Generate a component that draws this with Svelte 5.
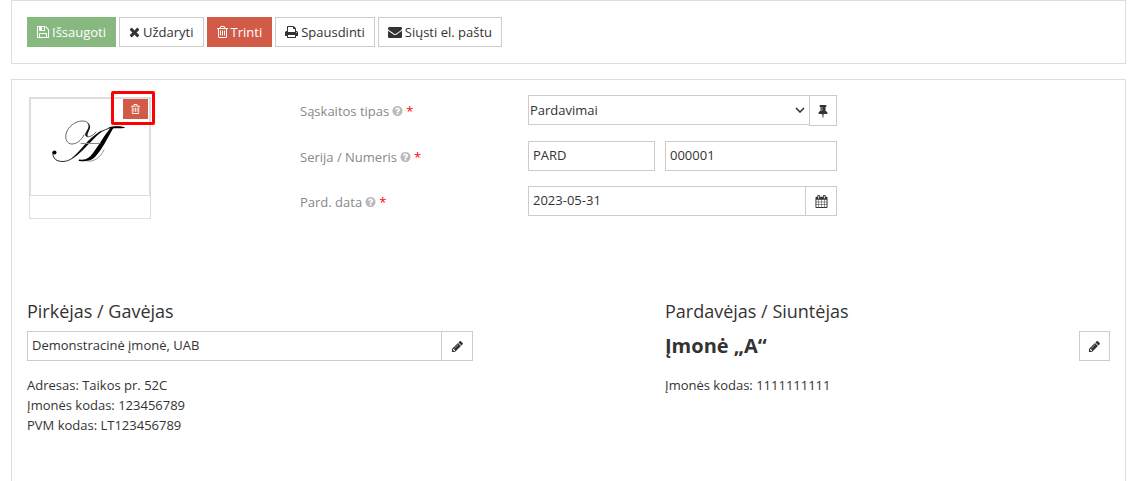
<script>
  const icons = {
    save: 'M512 1536h768v-384h-768v384zm896 0h128v-896q0-14-10-38.5t-20-34.5l-281-281q-10-10-34-20t-39-10v416q0 40-28 68t-68 28h-576q-40 0-68-28t-28-68v-416h-128v1280h128v-416q0-40 28-68t68-28h832q40 0 68 28t28 68v416zm-384-928v-320q0-13-9.5-22.5t-22.5-9.5h-192q-13 0-22.5 9.5t-9.5 22.5v320q0 13 9.5 22.5t22.5 9.5h192q13 0 22.5-9.5t9.5-22.5zm640 32v928q0 40-28 68t-68 28h-1344q-40 0-68-28t-28-68v-1344q0-40 28-68t68-28h928q40 0 88 20t76 48l280 280q28 28 48 76t20 88z',
    close: 'M1490 1322q0 40-28 68l-136 136q-28 28-68 28t-68-28l-294-294-294 294q-28 28-68 28t-68-28l-136-136q-28-28-28-68t28-68l294-294-294-294q-28-28-28-68t28-68l136-136q28-28 68-28t68 28l294 294 294-294q28-28 68-28t68 28l136 136q28 28 28 68t-28 68l-294 294 294 294q28 28 28 68z',
    trash: 'M704 736v576q0 14-9 23t-23 9h-64q-14 0-23-9t-9-23v-576q0-14 9-23t23-9h64q14 0 23 9t9 23zm256 0v576q0 14-9 23t-23 9h-64q-14 0-23-9t-9-23v-576q0-14 9-23t23-9h64q14 0 23 9t9 23zm256 0v576q0 14-9 23t-23 9h-64q-14 0-23-9t-9-23v-576q0-14 9-23t23-9h64q14 0 23 9t9 23zm128 724v-948h-896v948q0 22 7 40.5t14.5 27 10.5 8.5h832q3 0 10.5-8.5t14.5-27 7-40.5zm-672-1076h448l-48-117q-7-9-17-11h-317q-10 2-17 11zm928 32v64q0 14-9 23t-23 9h-96v948q0 83-47 143.5t-113 60.5h-832q-66 0-113-58.5t-47-141.5v-952h-96q-14 0-23-9t-9-23v-64q0-14 9-23t23-9h309l70-167q15-37 54-63t79-26h320q40 0 79 26t54 63l70 167h309q14 0 23 9t9 23z',
    print: 'M448 1536h896v-256h-896v256zm0-640h896v-384h-160q-40 0-68-28t-28-68v-160h-640v640zm1152 64q0-26-19-45t-45-19-45 19-19 45 19 45 45 19 45-19 19-45zm128 0v416q0 13-9.5 22.5t-22.5 9.5h-224v160q0 40-28 68t-68 28h-960q-40 0-68-28t-28-68v-160h-224q-13 0-22.5-9.5t-9.5-22.5v-416q0-79 56.5-135.5t135.5-56.5h64v-544q0-40 28-68t68-28h672q40 0 88 20t76 48l152 152q28 28 48 76t20 88v256h64q79 0 135.5 56.5t56.5 135.5z',
    mail: 'M1792 710v794q0 66-47 113t-113 47h-1472q-66 0-113-47t-47-113v-794q44 49 101 87 362 246 497 345 57 42 92.5 65.5t94.5 48 110 24.5h2q51 0 110-24.5t94.5-48 92.5-65.5q170-123 498-345 57-39 100-87zm0-294q0 79-49 151t-122 123q-376 261-468 325-10 7-42.5 31t-54 38.5-52 32.5-57.5 27-50 9h-2q-23 0-50-9t-57.5-27-52-32.5-54-38.5-42.5-31q-91-64-262-182.5t-205-142.5q-62-42-117-115.5t-55-136.5q0-78 41.5-130t118.5-52h1472q65 0 112.5 47t47.5 113z',
    help: 'M1024 1376v-192q0-14-9-23t-23-9h-192q-14 0-23 9t-9 23v192q0 14 9 23t23 9h192q14 0 23-9t9-23zm256-672q0-88-55.5-163t-138.5-116-170-41q-243 0-371 213-15 24 8 42l132 100q7 6 19 6 16 0 25-12 53-68 86-92 34-24 86-24 48 0 85.5 26t37.5 59q0 38-20 61t-68 45q-63 28-115.5 86.5t-52.5 125.5v36q0 14 9 23t23 9h192q14 0 23-9t9-23q0-19 21.5-49.5t54.5-49.5q32-18 49-28.5t46-35 44.5-48 28-60.5 12.5-81zm384 192q0 209-103 385.5t-279.5 279.5-385.5 103-385.5-103-279.5-279.5-103-385.5 103-385.5 279.5-279.5 385.5-103 385.5 103 279.5 279.5 103 385.5z',
    pin: 'M800 864v-448q0-14-9-23t-23-9-23 9-9 23v448q0 14 9 23t23 9 23-9 9-23zm672 352q0 26-19 45t-45 19h-429l-51 483q-2 12-10.5 20.5t-20.5 8.5h-1q-27 0-32-27l-76-485h-404q-26 0-45-19t-19-45q0-123 78.5-221.5t177.5-98.5v-512q-52 0-90-38t-38-90 38-90 90-38h640q52 0 90 38t38 90-38 90-90 38v512q99 0 177.5 98.5t78.5 221.5z',
    calendar: 'M192 1664h288v-288h-288v288zm352 0h320v-288h-320v288zm-352-352h288v-320h-288v320zm352 0h320v-320h-320v320zm-352-384h288v-288h-288v288zm736 736h320v-288h-320v288zm-384-736h320v-288h-320v288zm768 736h288v-288h-288v288zm-384-352h320v-320h-320v320zm-352-864v-288q0-13-9.5-22.5t-22.5-9.5h-64q-13 0-22.5 9.5t-9.5 22.5v288q0 13 9.5 22.5t22.5 9.5h64q13 0 22.5-9.5t9.5-22.5zm736 864h288v-320h-288v320zm-384-384h320v-288h-320v288zm384 0h288v-288h-288v288zm32-480v-288q0-13-9.5-22.5t-22.5-9.5h-64q-13 0-22.5 9.5t-9.5 22.5v288q0 13 9.5 22.5t22.5 9.5h64q13 0 22.5-9.5t9.5-22.5zm384-64v1280q0 52-38 90t-90 38h-1408q-52 0-90-38t-38-90v-1280q0-52 38-90t90-38h128v-96q0-66 47-113t113-47h64q66 0 113 47t47 113v96h384v-96q0-66 47-113t113-47h64q66 0 113 47t47 113v96h128q52 0 90 38t38 90z',
    pencil: 'M491 1536l91-91-235-235-91 91v107h128v128h107zm523-928q0-22-22-22-10 0-17 7l-542 542q-7 7-7 17 0 22 22 22 10 0 17-7l542-542q7-7 7-17zm-54-192l416 416-832 832h-416v-416zm683 96q0 53-37 90l-166 166-416-416 166-165q36-38 90-38 53 0 91 38l235 234q37 39 37 91z'
  };

  // Narrow glyphs are cropped to their advance width.
  const boxes = {
    close: { x: 192, w: 1408 },
    trash: { x: 192, w: 1408 },
    help: { x: 64, w: 1664 },
    save: { x: 128, w: 1536 },
    print: { x: 64, w: 1664 }
  };

  const actions = [
    { label: 'Išsaugoti', icon: 'save', kind: 'success' },
    { label: 'Uždaryti', icon: 'close', kind: 'plain' },
    { label: 'Trinti', icon: 'trash', kind: 'danger' },
    { label: 'Spausdinti', icon: 'print', kind: 'plain' },
    { label: 'Siųsti el. paštu', icon: 'mail', kind: 'plain' }
  ];

  let type = $state('Pardavimai');
  let series = $state('PARD');
  let number = $state('000001');
  let date = $state('2023-05-31');
  let buyer = $state('Demonstracinė įmonė, UAB');
</script>

{#snippet icon(name, size = 14)}
  {@const box = boxes[name] ?? { x: 0, w: 1792 }}
  <svg class="icon" viewBox="{box.x} 0 {box.w} 1792" width={Math.round((size * box.w) / 1792)} height={size} aria-hidden="true">
    <path d={icons[name]} fill="currentColor" />
  </svg>
{/snippet}

{#snippet fieldLabel(text, target)}
  <label class="field-label" for={target}>
    {text}
    <span class="help">{@render icon('help', 12)}</span>
    <span class="required">*</span>
  </label>
{/snippet}

<div class="page">
  <div class="panel toolbar">
    {#each actions as action}
      <button type="button" class="btn {action.kind}">
        {@render icon(action.icon)}
        {action.label}
      </button>
    {/each}
  </div>

  <main class="panel content">
    <div class="top">
      <div class="logo-box">
        <div class="logo-image">
          <svg viewBox="0 0 118 96" aria-hidden="true" fill="none" stroke="#111" stroke-linecap="round">
            <path d="M53 36 C50 42 45 45 41 45 C36 45 34 40 35 35 C37 27 45 22 51 22 C57 22 59 25 58 28 C57 32 53 34 55 37 C57 39 62 37 65 33" stroke="#444" stroke-width="0.8" />
            <path d="M56 24 C60 27 56 31 55 34 C54 36 55 38 57 37.500 C55 35 60 30 59 27 C58 25 57 24 56 24 Z" fill="#111" stroke="none" />
            <path d="M22 53 C21 60 26 62.500 32 62.500 C45 62 54 45 66 36 C73 30 81 27 93 28.500" stroke-width="0.9" />
            <path d="M42 58 C48 53 52 47 57 42 C62 37 67 33 72 31 C64 38 58 45 52 51 C48 55 44 58 40 60 Z" fill="#111" stroke="none" />
            <circle cx="23.500" cy="53.500" r="2" fill="#000" stroke="none" />
            <path d="M83 28 C77 38 71 51 64 58 C60 62 55 63 48 62 C47 61 48 60.500 49 60.500 C55 61.500 59 58 62 54 C68 46 74 35 80 28.500 Z" fill="#000" stroke="none" />
            <path d="M77 28.500 C83 26.500 90 27 94 28.500 C92 30 86 28.500 81 29.500 Z" fill="#000" stroke="none" />
            <path d="M56 62 C63 63 69 59 73 51" stroke="#777" stroke-width="0.800" />
            <path d="M50 44.500 H69" stroke="#888" stroke-width="1" />
          </svg>
        </div>
        <div class="remove-frame">
          <button type="button" class="remove" aria-label="Trinti">{@render icon('trash', 12)}</button>
        </div>
      </div>

      <form class="fields">
        {@render fieldLabel('Sąskaitos tipas', 'type')}
        <div class="group">
          <div class="select-wrap">
            <select id="type" bind:value={type}>
              <option>Pardavimai</option>
            </select>
            <svg class="chevron" viewBox="0 0 10 6" width="10" height="6" aria-hidden="true">
              <path d="M1 1 L5 5 L9 1" fill="none" stroke="currentColor" stroke-width="1.600" />
            </svg>
          </div>
          <button type="button" class="addon pin" aria-label="Prisegti">{@render icon('pin')}</button>
        </div>

        {@render fieldLabel('Serija / Numeris', 'series')}
        <div class="pair">
          <input id="series" type="text" bind:value={series} />
          <input type="text" aria-label="Numeris" bind:value={number} />
        </div>

        {@render fieldLabel('Pard. data', 'date')}
        <div class="group">
          <input id="date" type="text" bind:value={date} />
          <button type="button" class="addon" aria-label="Kalendorius">{@render icon('calendar', 13)}</button>
        </div>
      </form>
    </div>

    <div class="parties">
      <section>
        <h2><label for="buyer">Pirkėjas / Gavėjas</label></h2>
        <div class="group">
          <input id="buyer" type="text" bind:value={buyer} />
          <button type="button" class="addon" aria-label="Redaguoti">{@render icon('pencil', 13)}</button>
        </div>
        <div class="details">
          <div>Adresas: Taikos pr. 52C</div>
          <div>Įmonės kodas: 123456789</div>
          <div>PVM kodas: LT123456789</div>
        </div>
      </section>

      <section class="seller">
        <h2>Pardavėjas / Siuntėjas</h2>
        <div class="seller-name">
          <strong>Įmonė „A“</strong>
          <button type="button" class="addon edit" aria-label="Redaguoti">{@render icon('pencil', 13)}</button>
        </div>
        <div class="details">
          <div>Įmonės kodas: 1111111111</div>
        </div>
      </section>
    </div>
  </main>
</div>

<style>
  :global(body) {
    background: #fff;
  }

  .page {
    display: flex;
    flex-direction: column;
    gap: 15px;
    box-sizing: border-box;
    min-height: 100vh;
    padding: 0 2px 0 11px;
    font: 13px/20px 'Open Sans', sans-serif;
    color: #333;
  }

  .page :global(*) {
    box-sizing: border-box;
  }

  .panel {
    border: 1px solid #ddd;
    background: #fff;
  }

  .toolbar {
    display: flex;
    flex-wrap: wrap;
    gap: 3px;
    padding: 16px 15px;
  }

  .content {
    flex: 1;
    padding: 15px;
    border-bottom: 0;
  }

  button,
  input,
  select {
    margin: 0;
    border: 1px solid #ccc;
    border-radius: 0;
    background: #fff;
    color: #333;
    font: inherit;
  }

  .icon {
    display: block;
    flex: none;
  }

  .btn {
    display: flex;
    align-items: center;
    gap: 3px;
    height: 30px;
    padding: 0 9px;
  }

  .btn.success {
    border-color: #87b87f;
    background: #87b87f;
    color: #fff;
  }

  .btn.danger {
    border-color: #d15b47;
    background: #d15b47;
    color: #fff;
  }

  .top {
    display: grid;
    grid-template-columns: 273fr 537fr 273fr;
  }

  .logo-box {
    position: relative;
    width: 122px;
    height: 122px;
    margin: 2px 0 0 2px;
    border: 1px solid #ddd;
  }

  .logo-image {
    height: 98px;
    border: 1px solid #ddd;
  }

  .logo-image svg {
    display: block;
    width: 100%;
    height: 100%;
  }

  .remove-frame {
    position: absolute;
    top: -7px;
    right: -5px;
    display: flex;
    width: 44px;
    height: 34px;
    padding: 5px 4px 6px 9px;
    border: 3px solid #f00;
    border-radius: 2px;
  }

  .remove {
    display: flex;
    flex: 1;
    align-items: center;
    justify-content: center;
    height: 20px;
    padding: 0;
    border: 0;
    background: #d15b47;
    color: #fff;
  }

  .fields {
    display: grid;
    grid-template-columns: 228fr 309fr;
    row-gap: 15px;
    align-items: start;
    align-content: start;
  }

  .field-label {
    display: flex;
    gap: 3px;
    padding-top: 6px;
    color: #888;
  }

  .help {
    display: flex;
    align-items: center;
    color: #bbb;
  }

  .required {
    color: #f00;
  }

  .group {
    display: flex;
    align-items: flex-start;
  }

  .pair {
    display: grid;
    grid-template-columns: 127fr 172fr;
    gap: 10px;
  }

  input {
    flex: 1;
    width: 100%;
    min-width: 0;
    height: 30px;
    padding: 0 4px 2px;
  }

  .select-wrap {
    position: relative;
    flex: 1;
    display: flex;
  }

  select {
    width: 100%;
    height: 30px;
    padding: 0 20px 1px 1px;
    appearance: none;
  }

  .chevron {
    position: absolute;
    top: 12px;
    right: 5px;
    pointer-events: none;
  }

  .addon {
    display: flex;
    flex: none;
    align-items: center;
    justify-content: center;
    width: 32px;
    height: 30px;
    margin-left: -1px;
    padding: 0;
  }

  .addon.pin {
    width: 28px;
    height: 31px;
  }

  .addon.edit {
    width: 31px;
    margin: 0;
  }

  .parties {
    display: grid;
    grid-template-columns: 446fr 192fr 445fr;
    margin-top: 80px;
  }

  .seller {
    grid-column: 3;
  }

  h2 {
    margin: 0 0 8px;
    font-size: 18px;
    font-weight: 400;
    line-height: 24px;
  }

  .seller-name {
    display: flex;
    align-items: center;
    justify-content: space-between;
  }

  .seller-name strong {
    font-size: 20px;
    line-height: 30px;
  }

  .details {
    margin-top: 14px;
  }
</style>
